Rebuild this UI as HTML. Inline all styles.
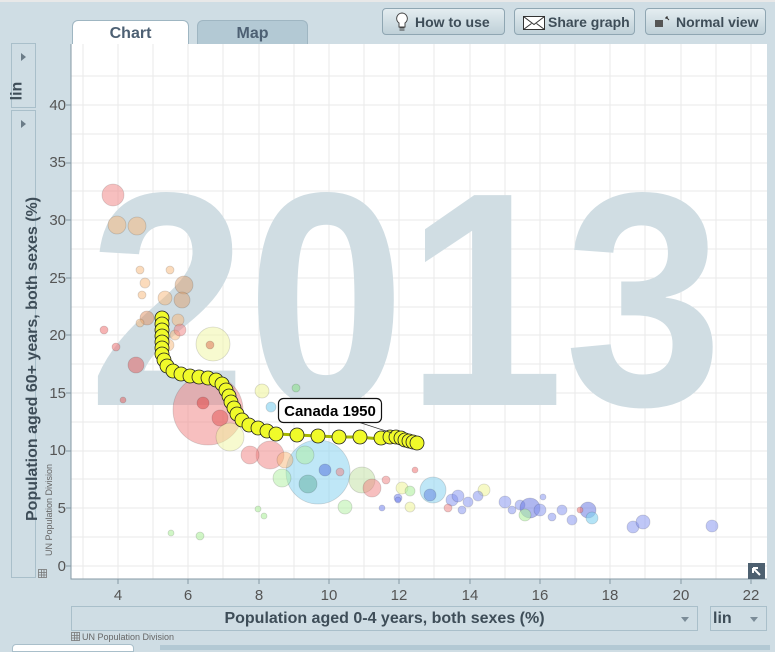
<!DOCTYPE html>
<html><head><meta charset="utf-8"><style>
body{margin:0;width:775px;height:648px;background:#cfdde4;font-family:"Liberation Sans",sans-serif;overflow:hidden;position:relative}
.btn{position:absolute;top:8px;height:27px;border:1px solid #8fa6b2;border-radius:4px;background:linear-gradient(#e4edf1,#bfd0d8);font-weight:bold;font-size:14px;color:#3e4d58;line-height:27px;box-sizing:border-box}
.tab{position:absolute;top:20px;height:25px;border:1px solid #9fb6c2;border-bottom:none;border-radius:6px 6px 0 0;font-weight:bold;font-size:16px;color:#4d6073;text-align:center;line-height:25px;box-sizing:border-box}
.box{position:absolute;border:1px solid #a9bfca;background:#cfdde4;box-sizing:border-box}
</style></head><body>
<div style="position:absolute;left:0;top:0;width:775px;height:2px;background:#e8e8e8"></div>
<div class="tab" style="left:72px;width:117px;background:#fff">Chart</div>
<div class="tab" style="left:197px;width:111px;background:#b3c9d4">Map</div>
<div class="btn" style="left:382px;width:123px;padding-left:32px"><svg style="position:absolute;left:12px;top:3px" width="14" height="21" viewBox="0 0 14 21"><path d="M7 1a5.5 5.5 0 0 0-3 10v4h6v-4a5.5 5.5 0 0 0-3-10z" fill="#fff" stroke="#444"/><path d="M4.5 16h5M4.5 18h5" stroke="#444"/></svg>How to use</div>
<div class="btn" style="left:514px;width:121px;padding-left:33px"><svg style="position:absolute;left:8px;top:7px" width="22" height="14"><rect x="0.5" y="0.5" width="21" height="13" fill="#fff" stroke="#333"/><path d="M0.5 0.5l10.5 8 10.5-8M0.5 13.5l8-6M21.5 13.5l-8-6" fill="none" stroke="#333"/></svg>Share graph</div>
<div class="btn" style="left:645px;width:121px;padding-left:30px"><svg style="position:absolute;left:9px;top:7px" width="16" height="12"><rect x="0" y="4" width="8" height="7" fill="#555"/><path d="M11 1l3 3M11 1v2M11 1h2" stroke="#333" fill="none"/></svg>Normal view</div>

<div class="box" style="left:11px;top:43px;width:25px;height:65px"><div style="position:absolute;left:9px;top:9px;border-left:5px solid #6b7c88;border-top:4px solid transparent;border-bottom:4px solid transparent"></div><div style="position:absolute;left:-4px;top:38px;transform:rotate(-90deg);font-weight:bold;font-size:16px;color:#3e4d58">lin</div></div>
<div class="box" style="left:11px;top:110px;width:25px;height:468px"><div style="position:absolute;left:9px;top:9px;border-left:5px solid #6b7c88;border-top:4px solid transparent;border-bottom:4px solid transparent"></div><div style="position:absolute;left:12px;top:410px;transform-origin:0 0;transform:rotate(-90deg);white-space:nowrap;font-weight:bold;font-size:16px;color:#3e4d58;width:400px">Population aged 60+ years, both sexes (%)</div></div>
<div style="position:absolute;left:44px;top:556px;transform-origin:0 0;transform:rotate(-90deg);font-size:9px;color:#666;white-space:nowrap">UN Population Division</div>

<svg style="position:absolute;left:0;top:0" width="775" height="648">
<rect x="71" y="44" width="696" height="535" fill="#fff"/>
<g stroke="#eaeaea" stroke-width="1">
<path d="M83 44V579M118 44V579M153 44V579M188 44V579M223 44V579M259 44V579M294 44V579M329 44V579M364 44V579M399 44V579M434 44V579M470 44V579M505 44V579M540 44V579M575 44V579M610 44V579M645 44V579M681 44V579M716 44V579M751 44V579"/>
<path d="M71 566H767M71 537H767M71 508H767M71 479H767M71 451H767M71 422H767M71 393H767M71 364H767M71 335H767M71 307H767M71 278H767M71 249H767M71 220H767M71 191H767M71 163H767M71 134H767M71 105H767M71 76H767"/>
</g>
<text x="88" y="405" font-family="Liberation Sans" font-weight="bold" font-size="305" fill="#d0dde3" textLength="635" lengthAdjust="spacingAndGlyphs">2013</text>
<path d="M71 44V579H767" fill="none" stroke="#8599a5"/>
<g font-size="15" fill="#555" text-anchor="end">
<text x="66" y="571">0</text><text x="66" y="513">5</text><text x="66" y="455">10</text><text x="66" y="398">15</text><text x="66" y="340">20</text><text x="66" y="283">25</text><text x="66" y="225">30</text><text x="66" y="167">35</text><text x="66" y="110">40</text>
</g>
<g font-size="15" fill="#555" text-anchor="middle">
<text x="118" y="600">4</text><text x="188" y="600">6</text><text x="259" y="600">8</text><text x="329" y="600">10</text><text x="399" y="600">12</text><text x="470" y="600">14</text><text x="540" y="600">16</text><text x="610" y="600">18</text><text x="681" y="600">20</text><text x="751" y="600">22</text>
</g>
<g stroke="#8599a5"><path d="M118 579v5M188 579v5M259 579v5M329 579v5M399 579v5M470 579v5M540 579v5M610 579v5M681 579v5M751 579v5M66 566h5M66 508h5M66 451h5M66 393h5M66 335h5M66 278h5M66 220h5M66 163h5M66 105h5"/></g>
<g stroke="#000" stroke-opacity="0.15" stroke-width="0.8">
<circle cx="113" cy="195" r="11" fill="#f08080" fill-opacity=".5"/>
<circle cx="117" cy="225" r="9" fill="#f7b87a" fill-opacity=".5"/><circle cx="137" cy="226" r="9" fill="#f7b87a" fill-opacity=".5"/>
<circle cx="140" cy="270" r="4" fill="#f7b87a" fill-opacity=".5"/><circle cx="145" cy="283" r="5" fill="#f7b87a" fill-opacity=".5"/><circle cx="142" cy="295" r="4" fill="#f7b87a" fill-opacity=".5"/>
<circle cx="184" cy="285" r="9" fill="#d9a070" fill-opacity=".5"/><circle cx="182" cy="300" r="8" fill="#d9a070" fill-opacity=".5"/><circle cx="165" cy="298" r="7" fill="#f7b87a" fill-opacity=".5"/><circle cx="170" cy="270" r="4" fill="#f7b87a" fill-opacity=".5"/><circle cx="178" cy="320" r="6" fill="#f7b87a" fill-opacity=".5"/>
<circle cx="147" cy="318" r="7" fill="#e09060" fill-opacity=".5"/><circle cx="140" cy="323" r="4" fill="#f7b87a" fill-opacity=".5"/><circle cx="104" cy="330" r="4" fill="#f08080" fill-opacity=".6"/><circle cx="116" cy="347" r="4" fill="#f08080" fill-opacity=".6"/>
<circle cx="136" cy="365" r="8" fill="#e07070" fill-opacity=".6"/><circle cx="123" cy="400" r="3" fill="#e07070" fill-opacity=".6"/>
<circle cx="168" cy="345" r="6" fill="#f7b87a" fill-opacity=".5"/><circle cx="175" cy="335" r="5" fill="#f7b87a" fill-opacity=".5"/><circle cx="180" cy="330" r="6" fill="#f08080" fill-opacity=".5"/>
<circle cx="213" cy="344" r="17" fill="#f0f5a0" fill-opacity=".5"/><circle cx="210" cy="345" r="4" fill="#e08060" fill-opacity=".6"/>
<circle cx="208" cy="410" r="35" fill="#f08080" fill-opacity=".5"/><circle cx="203" cy="403" r="6" fill="#e05050" fill-opacity=".6"/><circle cx="220" cy="418" r="8" fill="#e05050" fill-opacity=".5"/>
<circle cx="230" cy="437" r="14" fill="#f0f5a0" fill-opacity=".5"/><circle cx="262" cy="391" r="7" fill="#f0f5a0" fill-opacity=".6"/><circle cx="296" cy="388" r="4" fill="#90e090" fill-opacity=".6"/><circle cx="271" cy="407" r="5" fill="#80d0f0" fill-opacity=".6"/>
<circle cx="318" cy="472" r="32" fill="#80d0f0" fill-opacity=".5"/><circle cx="308" cy="484" r="9" fill="#60b0a0" fill-opacity=".5"/><circle cx="325" cy="470" r="6" fill="#6080e0" fill-opacity=".6"/>
<circle cx="270" cy="455" r="14" fill="#f08080" fill-opacity=".5"/><circle cx="250" cy="455" r="9" fill="#f08080" fill-opacity=".5"/><circle cx="285" cy="460" r="8" fill="#f7b87a" fill-opacity=".5"/>
<circle cx="282" cy="478" r="9" fill="#b0f0a0" fill-opacity=".5"/><circle cx="305" cy="455" r="9" fill="#b0f0a0" fill-opacity=".5"/>
<circle cx="362" cy="480" r="13" fill="#c0e0a0" fill-opacity=".5"/><circle cx="372" cy="488" r="9" fill="#f08080" fill-opacity=".5"/><circle cx="345" cy="507" r="7" fill="#b0f0a0" fill-opacity=".5"/><circle cx="340" cy="472" r="4" fill="#f08080" fill-opacity=".5"/>
<circle cx="386" cy="480" r="4" fill="#f08080" fill-opacity=".5"/><circle cx="402" cy="488" r="6" fill="#f0f5a0" fill-opacity=".6"/><circle cx="410" cy="491" r="5" fill="#b0f0a0" fill-opacity=".6"/><circle cx="398" cy="498" r="4" fill="#8090f0" fill-opacity=".6"/><circle cx="398" cy="500" r="3" fill="#8090f0" fill-opacity=".6"/>
<circle cx="433" cy="490" r="13" fill="#80d0f0" fill-opacity=".5"/><circle cx="430" cy="495" r="6" fill="#6080e0" fill-opacity=".5"/>
<circle cx="415" cy="470" r="3" fill="#f08080" fill-opacity=".6"/><circle cx="382" cy="508" r="3" fill="#8090f0" fill-opacity=".6"/><circle cx="410" cy="507" r="5" fill="#f0f5a0" fill-opacity=".6"/>
<circle cx="452" cy="500" r="6" fill="#8090f0" fill-opacity=".5"/><circle cx="468" cy="502" r="5" fill="#8090f0" fill-opacity=".5"/><circle cx="458" cy="496" r="6" fill="#8090f0" fill-opacity=".5"/><circle cx="484" cy="490" r="6" fill="#f0f5a0" fill-opacity=".6"/><circle cx="478" cy="496" r="5" fill="#8090f0" fill-opacity=".5"/><circle cx="448" cy="508" r="4" fill="#f08080" fill-opacity=".5"/><circle cx="462" cy="510" r="4" fill="#8090f0" fill-opacity=".5"/>
<circle cx="505" cy="502" r="6" fill="#8090f0" fill-opacity=".5"/><circle cx="520" cy="505" r="5" fill="#8090f0" fill-opacity=".5"/><circle cx="530" cy="508" r="10" fill="#6070e0" fill-opacity=".5"/><circle cx="525" cy="515" r="6" fill="#b0f0a0" fill-opacity=".6"/><circle cx="540" cy="510" r="6" fill="#8090f0" fill-opacity=".5"/><circle cx="512" cy="510" r="4" fill="#8090f0" fill-opacity=".5"/><circle cx="543" cy="497" r="3" fill="#8090f0" fill-opacity=".5"/><circle cx="552" cy="517" r="4" fill="#8090f0" fill-opacity=".5"/>
<circle cx="562" cy="510" r="5" fill="#8090f0" fill-opacity=".5"/><circle cx="572" cy="520" r="5" fill="#8090f0" fill-opacity=".5"/><circle cx="588" cy="510" r="8" fill="#6070e0" fill-opacity=".5"/><circle cx="592" cy="518" r="6" fill="#80d0f0" fill-opacity=".6"/><circle cx="580" cy="510" r="3" fill="#f08080" fill-opacity=".6"/>
<circle cx="633" cy="527" r="6" fill="#8090f0" fill-opacity=".5"/><circle cx="643" cy="522" r="7" fill="#8090f0" fill-opacity=".5"/><circle cx="712" cy="526" r="6" fill="#8090f0" fill-opacity=".5"/>
<circle cx="200" cy="536" r="4" fill="#b0f0a0" fill-opacity=".6"/><circle cx="171" cy="533" r="3" fill="#b0f0a0" fill-opacity=".6"/><circle cx="258" cy="509" r="3" fill="#b0f0a0" fill-opacity=".6"/><circle cx="264" cy="516" r="3" fill="#b0f0a0" fill-opacity=".6"/>
</g>
<polyline points="418,443 380,439 359,437 340,437 318,436 297,435 277,434" fill="none" stroke="#a6b800" stroke-width="3"/>
<g fill="#f0fa2a" stroke="#222" stroke-width="0.8">
<circle cx="162" cy="318" r="7"/><circle cx="162" cy="324" r="7"/><circle cx="162" cy="330" r="7"/><circle cx="162" cy="336" r="7"/><circle cx="162" cy="342" r="7"/><circle cx="162" cy="348" r="7"/><circle cx="162" cy="354" r="7"/><circle cx="164" cy="360" r="7"/><circle cx="167" cy="366" r="7"/><circle cx="173" cy="371" r="7"/><circle cx="181" cy="374" r="7"/><circle cx="190" cy="376" r="7"/><circle cx="199" cy="377" r="7"/><circle cx="208" cy="378" r="7"/><circle cx="216" cy="380" r="7"/><circle cx="222" cy="384" r="7"/><circle cx="226" cy="390" r="7"/><circle cx="229" cy="396" r="7"/><circle cx="231" cy="402" r="7"/><circle cx="234" cy="408" r="7"/><circle cx="237" cy="414" r="7"/><circle cx="242" cy="420" r="7"/><circle cx="249" cy="425" r="7"/><circle cx="258" cy="428" r="7"/><circle cx="267" cy="431" r="7"/><circle cx="276" cy="434" r="7"/><circle cx="297" cy="435" r="7"/><circle cx="318" cy="436" r="7"/><circle cx="339" cy="437" r="7"/><circle cx="360" cy="437" r="7"/><circle cx="381" cy="438" r="7"/><circle cx="390" cy="437" r="7"/><circle cx="396" cy="437" r="7"/><circle cx="401" cy="438" r="7"/><circle cx="405" cy="440" r="7"/><circle cx="409" cy="441" r="7"/><circle cx="413" cy="442" r="7"/><circle cx="417" cy="443" r="7"/>
</g>
<line x1="352" y1="420" x2="392" y2="433" stroke="#333" stroke-width="0.8"/>
<rect x="278.5" y="398.5" width="103" height="24" rx="5" fill="#fff" stroke="#111" stroke-width="1.2"/>
<text x="330" y="416" text-anchor="middle" font-family="Liberation Sans" font-weight="bold" font-size="15" fill="#000">Canada 1950</text>
<rect x="748" y="563" width="17" height="16" fill="#4d6070"/>
<path d="M753 568l7 7M753 568h5M753 568v5" stroke="#fff" stroke-width="2" fill="none"/>
<g stroke="#777" fill="none" stroke-width="0.8"><rect x="38.5" y="569.5" width="8" height="8"/><path d="M38.5 572.5h8M38.5 575h8M41.5 569.5v8M44 569.5v8"/>
<rect x="71.5" y="632.5" width="8" height="8"/><path d="M71.5 635.5h8M71.5 638h8M74.5 632.5v8M77 632.5v8"/></g>
<text x="82" y="640" font-family="Liberation Sans" font-size="9" fill="#666">UN Population Division</text>
</svg>

<div class="box" style="left:71px;top:606px;width:627px;height:25px;text-align:center;font-weight:bold;font-size:16px;color:#3e4d58;line-height:24px">Population aged 0-4 years, both sexes (%)<div style="position:absolute;right:8px;top:10px;border-top:5px solid #7b8c98;border-left:4px solid transparent;border-right:4px solid transparent"></div></div>
<div class="box" style="left:710px;top:606px;width:57px;height:25px;font-weight:bold;font-size:16px;color:#3e4d58;line-height:24px;padding-left:2px">lin<div style="position:absolute;right:8px;top:10px;border-top:5px solid #7b8c98;border-left:4px solid transparent;border-right:4px solid transparent"></div></div>
<div style="position:absolute;left:12px;top:644px;width:120px;height:6px;background:#fff;border:1px solid #a9bfca;border-radius:4px 4px 0 0"></div>
<div style="position:absolute;left:160px;top:645px;width:610px;height:5px;background:#b3c9d4"></div>
</body></html>
